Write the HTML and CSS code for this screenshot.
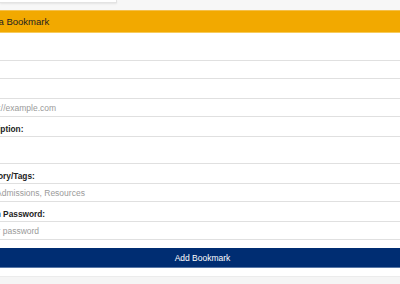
FILE: index.html
```html
<!DOCTYPE html>
<html>
<head>
<meta charset="utf-8">
<link rel="stylesheet" href="styles.css">
</head>
<body>
<div class="topbar"><div class="menu"></div></div>
<div class="panel">
  <div class="panel-head">Add a Bookmark</div>
  <form class="form">
    <label class="lbl">Title:</label>
    <input class="field" type="text">
    <label class="lbl">URL:</label>
    <input class="field" type="text" placeholder="https://example.com">
    <label class="lbl">Description:</label>
    <textarea class="field area"></textarea>
    <label class="lbl">Category/Tags:</label>
    <input class="field" type="text" placeholder="e.g. Admissions, Resources">
    <label class="lbl">Admin Password:</label>
    <input class="field" type="password" placeholder="Enter password">
    <button class="btn" type="button">Add Bookmark</button>
  </form>
</div>
<div class="footer"></div>
</body>
</html>
```
FILE: styles.css
```css
html, body {
  margin: 0;
  padding: 0;
  overflow: hidden;
  background: #fff;
  font-family: "Liberation Sans", Arial, sans-serif;
}
.topbar {
  height: 10px;
  background: #f7f7f7;
  display: flex;
  align-items: flex-start;
}
.menu {
  width: 117px;
  height: 3px;
  box-sizing: border-box;
  background: #fff;
  border: 1px solid #e3e3e3;
  border-top: 0;
  border-left: 0;
  box-shadow: 0 1px 2px rgba(0, 0, 0, 0.08);
}
.panel {
  margin-left: -25px;
  width: 455px;
  background: #fff;
}
.panel-head {
  height: 21px;
  background: #f2a900;
  border-top: 1px solid #f5c04a;
  border-bottom: 1px solid #f7cb5c;
  padding-left: 4px;
  font-size: 9.5px;
  color: #222;
  display: flex;
  align-items: center;
}
.form {
  display: flex;
  flex-direction: column;
  padding: 8px 0;
  margin: 0;
}
.lbl {
  height: 19px;
  box-sizing: border-box;
  padding-top: 4px;
  display: flex;
  align-items: center;
  font-size: 8.3px;
  font-weight: bold;
  color: #222;
}
.field {
  height: 19px;
  box-sizing: border-box;
  border: 1px solid #e0e0e0;
  border-radius: 0;
  padding: 0 4px;
  margin: 0;
  font-family: "Liberation Sans", Arial, sans-serif;
  font-size: 8.5px;
  color: #333;
  background: #fff;
  outline: none;
}
.field::placeholder {
  color: #9a9a9a;
}
.area {
  height: 28px;
  resize: none;
  padding: 4px;
}
.btn {
  margin-top: 8px;
  height: 20px;
  background: #002d72;
  color: #fff;
  border: 0;
  border-bottom: 1px solid #5877a6;
  border-radius: 0;
  font-family: "Liberation Sans", Arial, sans-serif;
  font-size: 8.5px;
  padding: 0;
}
.footer {
  height: 20px;
  background: #f5f5f5;
  border-top: 1px solid #ececec;
}
```
